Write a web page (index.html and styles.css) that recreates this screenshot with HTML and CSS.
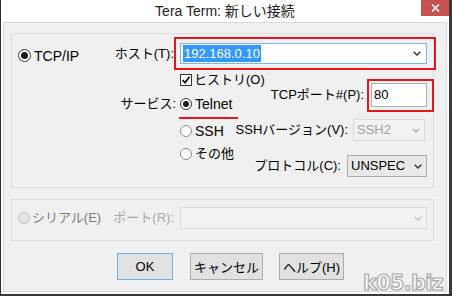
FILE: index.html
```html
<!DOCTYPE html>
<html lang="ja">
<head>
<meta charset="utf-8">
<title>Tera Term: 新しい接続</title>
<link rel="stylesheet" href="styles.css">
</head>
<body>
<div class="window">
  <div class="titlebar">
    <span class="title">Tera Term: 新しい接続</span>
    <span class="close"><svg width="9" height="8" viewBox="0 0 9 8"><path d="M1 0.5 L8 7.5 M8 0.5 L1 7.5" stroke="#fff" stroke-width="1.6" fill="none"/></svg></span>
  </div>
  <div class="client">
    <div class="group tcp">
      <div class="radio radio-main"><span class="dot checked"></span>TCP/IP</div>
      <span class="label label-host">ホスト(T):</span>
      <div class="combo combo-host hl hl-host">
        <span class="sel">192.168.0.10</span>
        <svg class="chev" width="8" height="5" viewBox="0 0 8 5"><path d="M0.7 0.7 L4 4 L7.3 0.7" fill="none" stroke="#333" stroke-width="1.4"/></svg>
      </div>
      <span class="label label-service">サービス:</span>
      <div class="lower">
        <div class="opts">
          <div class="check"><span class="box"><svg width="10" height="10" viewBox="0 0 10 10"><path d="M1.5 5 L4 7.6 L8.6 1.8" fill="none" stroke="#111" stroke-width="1.8"/></svg></span>ヒストリ(O)</div>
          <div class="radio radio-opt telnet"><span class="dot checked"></span>Telnet</div>
          <div class="radio radio-opt ssh"><span class="dot"></span>SSH</div>
          <div class="radio radio-opt other"><span class="dot"></span>その他</div>
        </div>
        <div class="settings">
          <div class="setting setting-port"><span>TCPポート#(P):</span><div class="input hl hl-port">80</div></div>
          <div class="setting setting-ssh"><span>SSHバージョン(V):</span>
            <div class="combo combo-disabled combo-ssh"><span>SSH2</span><svg class="chev" width="8" height="5" viewBox="0 0 8 5"><path d="M0.7 0.7 L4 4 L7.3 0.7" fill="none" stroke="#b4b4b4" stroke-width="1.4"/></svg></div>
          </div>
          <div class="setting setting-proto"><span>プロトコル(C):</span>
            <div class="combo combo-proto"><span>UNSPEC</span><svg class="chev" width="8" height="5" viewBox="0 0 8 5"><path d="M0.7 0.7 L4 4 L7.3 0.7" fill="none" stroke="#333" stroke-width="1.4"/></svg></div>
          </div>
        </div>
      </div>
    </div>
    <div class="group serial">
      <div class="radio radio-serial disabled"><span class="dot dot-disabled"></span>シリアル(E)</div>
      <span class="label label-port disabled-light">ポート(R):</span>
      <div class="combo combo-disabled combo-serial"><span></span><svg class="chev" width="8" height="5" viewBox="0 0 8 5"><path d="M0.7 0.7 L4 4 L7.3 0.7" fill="none" stroke="#c4c4c4" stroke-width="1.4"/></svg></div>
    </div>
    <div class="buttons">
      <button class="btn btn-ok">OK</button>
      <button class="btn btn-cancel">キャンセル</button>
      <button class="btn btn-help">ヘルプ(H)</button>
    </div>
  </div>
  <div class="watermark">k05.biz</div>
</div>
</body>
</html>
```
FILE: styles.css
```css
html, body {
  margin: 0;
  padding: 0;
  background: #fff;
}
body {
  font-family: "Liberation Sans", "Noto Sans CJK JP", sans-serif;
  font-size: 13px;
  color: #000;
}
.window {
  position: relative;
  width: 452px;
  height: 296px;
  box-sizing: border-box;
  border-left: 1px solid #2e2e2e;
  border-right: 3px solid #3a3a3a;
  border-bottom: 2px solid #3a3a3a;
  background: #fff;
  display: flex;
  flex-direction: column;
  overflow: hidden;
}
.titlebar {
  position: relative;
  height: 22px;
  flex: none;
  display: flex;
  justify-content: center;
  align-items: center;
  font-size: 14px;
  color: #222;
}
.title {
  line-height: 22px;
}
.close {
  position: absolute;
  top: 0;
  right: 0;
  width: 28px;
  height: 16px;
  background: #c75050;
  display: flex;
  align-items: center;
  justify-content: center;
}
.client {
  flex: 1;
  margin: 0 2px 2px 2px;
  border: 1px solid #d9d9d9;
  background: #f0f0f0;
  display: flex;
  flex-direction: column;
}
.group {
  box-sizing: border-box;
  border: 1px solid #dcdcdc;
  margin: 0 12px 0 7px;
  display: grid;
  grid-template-columns: 92px 70px 1fr;
  padding: 0 6px;
}
.tcp {
  margin-top: 10px;
  height: 155px;
  padding-top: 9px;
  grid-template-rows: 21px auto;
  align-items: start;
}
.serial {
  margin-top: 11px;
  height: 42px;
  padding-top: 7px;
  grid-template-rows: 22px;
  align-items: center;
}
.label {
  text-align: right;
  padding-right: 3px;
  white-space: nowrap;
  line-height: 14px;
}
.tcp .label {
  align-self: center;
}
.tcp .label-host {
  padding-right: 6px;
}
.tcp .label-service {
  grid-column: 2;
  grid-row: 2;
  align-self: start;
  padding-top: 33px;
  padding-right: 4px;
}
.label-port {
  padding-right: 6px;
}
.radio {
  display: flex;
  align-items: center;
  line-height: 14px;
  white-space: nowrap;
}
.radio-main {
  font-size: 14px;
}
.tcp .radio-main {
  align-self: center;
  margin-top: 4px;
}
.radio-serial {
  font-size: 13px;
}
.radio-opt.telnet, .radio-opt.ssh {
  font-size: 14px;
}
.dot {
  position: relative;
  flex: none;
  width: 12px;
  height: 12px;
  box-sizing: border-box;
  border-radius: 50%;
  border: 1px solid #8a8a8a;
  background: #fff;
  margin-right: 3px;
}
.radio-main .dot {
  width: 13px;
  height: 13px;
}
.dot.checked {
  border-color: #333;
}
.dot.checked::after {
  content: "";
  position: absolute;
  left: 2px;
  top: 2px;
  right: 2px;
  bottom: 2px;
  border-radius: 50%;
  background: #1a1a1a;
}
.dot-disabled {
  border-color: #c2c2c2;
  background: #e6e6e6;
  margin-right: 2px;
}
.disabled {
  color: #7c7c7c;
}
.disabled-light {
  color: #a8a8a8;
}
.combo {
  box-sizing: border-box;
  height: 22px;
  border: 1px solid #acacac;
  background: #e9e9e9;
  display: flex;
  align-items: center;
  justify-content: space-between;
  padding: 0 4px 0 3px;
  white-space: nowrap;
}
.combo-host {
  height: 21px;
  background: #fff;
  border-color: #7eb4ea;
  padding: 0 5px 0 2px;
}
.sel {
  background: #3399ff;
  color: #fff;
  line-height: 17px;
  padding: 0 1px;
}
.combo-disabled {
  background: #f2f2f2;
  border-color: #d9d9d9;
  color: #a0a0a0;
}
.combo-ssh {
  width: 72px;
  margin-right: 2px;
}
.combo-proto {
  width: 80px;
}
.hl {
  position: relative;
}
.hl::after {
  content: "";
  position: absolute;
  border: 2px solid #e8141c;
  pointer-events: none;
}
.hl-host::after {
  left: -7px;
  right: -10px;
  top: -7px;
  bottom: -7px;
}
.hl-port::after {
  left: -5px;
  right: -8px;
  top: -5px;
  bottom: -6px;
}
.lower {
  grid-column: 3;
  grid-row: 2;
  display: grid;
  grid-template-columns: 53px 1fr;
}
.opts {
  display: flex;
  flex-direction: column;
}
.check {
  display: flex;
  align-items: center;
  line-height: 14px;
  white-space: nowrap;
  margin-top: 9px;
}
.box {
  flex: none;
  width: 12px;
  height: 12px;
  box-sizing: border-box;
  border: 1px solid #333;
  background: #fff;
  margin-right: 2px;
  display: flex;
  align-items: center;
  justify-content: center;
}
.telnet {
  position: relative;
  margin-top: 10px;
}
.telnet::after {
  content: "";
  position: absolute;
  left: -1px;
  top: 20px;
  width: 59px;
  height: 2px;
  background: #e8141c;
}
.ssh {
  margin-top: 13px;
}
.other {
  margin-top: 9px;
}
.settings {
  display: flex;
  flex-direction: column;
  align-items: flex-end;
}
.setting {
  display: flex;
  align-items: center;
  gap: 6px;
  white-space: nowrap;
  line-height: 14px;
}
.setting-port {
  margin-top: 19px;
  gap: 7px;
}
.setting-ssh {
  margin-top: 12px;
  gap: 5px;
}
.setting-proto {
  margin-top: 14px;
}
.input {
  box-sizing: border-box;
  width: 56px;
  height: 24px;
  border: 1px solid #abadb3;
  background: #fff;
  padding-left: 2px;
  display: flex;
  align-items: center;
}
.combo-serial {
  width: 247px;
}
.buttons {
  display: flex;
  gap: 17px;
  margin-top: 12px;
  padding-left: 113px;
}
.btn {
  box-sizing: border-box;
  height: 27px;
  border: 1px solid #adadad;
  background: #e1e1e1;
  font: inherit;
  color: #000;
  padding: 0;
  display: flex;
  align-items: center;
  justify-content: center;
}
.btn-ok {
  width: 56px;
  border-color: #6aaeea;
}
.btn-cancel {
  width: 73px;
}
.btn-help {
  width: 65px;
  margin-left: -1px;
}
.watermark {
  position: absolute;
  right: 6px;
  bottom: 0;
  font-family: "DejaVu Sans", sans-serif;
  font-weight: bold;
  font-size: 21px;
  line-height: 22px;
  letter-spacing: -0.8px;
  color: #f6f6f6;
  -webkit-text-stroke: 1.2px #a9a9a9;
}
```
